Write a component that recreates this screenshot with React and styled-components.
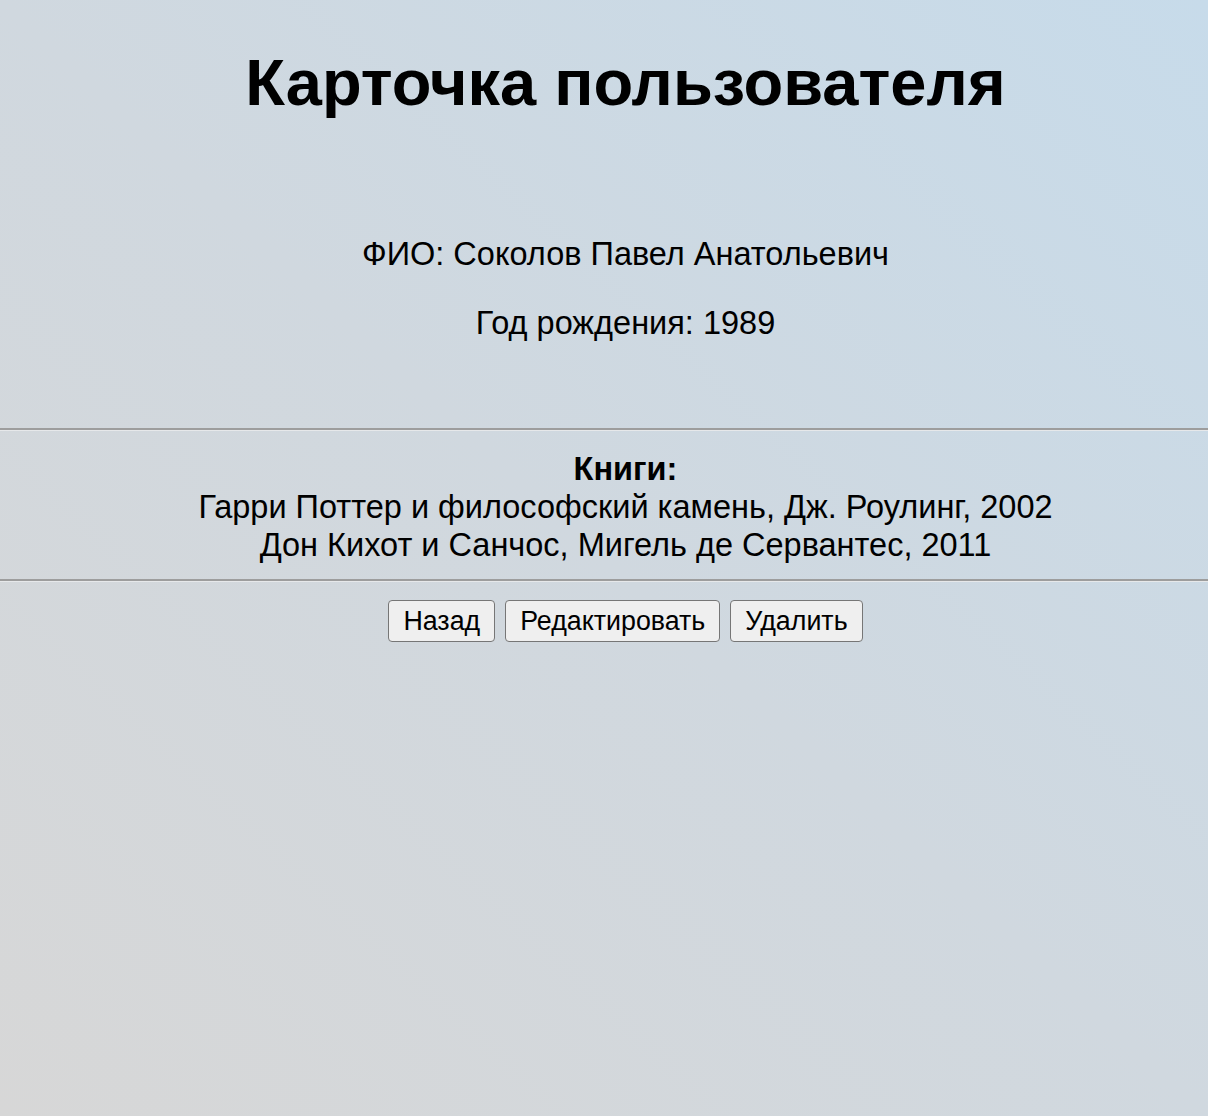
import React from "react";
import styled, { createGlobalStyle } from "styled-components";

const GlobalStyle = createGlobalStyle`
  html, body {
    margin: 0;
    padding: 0;
  }
  body {
    min-height: 100vh;
    background: linear-gradient(to top right, #d7d7d7 0%, #d0d8df 50%, #c7dbea 100%);
    font-family: "Liberation Sans", Arial, sans-serif;
    color: #000;
  }
`;

const Page = styled.div`
  min-height: 100vh;
  display: flex;
  flex-direction: column;
`;

const Section = styled.div`
  padding-left: 43px;
  text-align: center;
`;

const Title = styled.h1`
  margin: 45px 0 0 0;
  font-size: 65px;
  font-weight: bold;
`;

const Info = styled.div`
  margin-top: 116px;
  display: flex;
  flex-direction: column;
  gap: 32px;
  padding-bottom: 86px;
`;

const Line = styled.p`
  margin: 0;
  font-size: 32.5px;
`;

const Divider = styled.hr`
  margin: 0;
  border: none;
  border-top: 2px solid #9d9d9d;
  border-bottom: 1px solid #e6e8ea;
  height: 0;
`;

const Books = styled.div`
  padding: 19px 0 15px;
  font-size: 32.5px;
  line-height: 38px;
`;

const BooksTitle = styled.div`
  font-weight: bold;
`;

const Actions = styled.div`
  display: flex;
  justify-content: center;
  gap: 10px;
  margin-top: 18px;
`;

const Button = styled.button`
  font-family: "Liberation Sans", Arial, sans-serif;
  font-size: 26.8px;
  height: 42px;
  padding: 0 14px;
  background: #efefef;
  border: 1.5px solid #767676;
  border-radius: 4px;
  color: #000;
`;

const books = [
  "Гарри Поттер и философский камень, Дж. Роулинг, 2002",
  "Дон Кихот и Санчос, Мигель де Сервантес, 2011",
];

export default function App() {
  return (
    <Page>
      <GlobalStyle />
      <Section>
        <Title>Карточка пользователя</Title>
        <Info>
          <Line>ФИО: Соколов Павел Анатольевич</Line>
          <Line>Год рождения: 1989</Line>
        </Info>
      </Section>
      <Divider />
      <Section>
        <Books>
          <BooksTitle>Книги:</BooksTitle>
          {books.map((b) => (
            <div key={b}>{b}</div>
          ))}
        </Books>
      </Section>
      <Divider />
      <Section>
        <Actions>
          <Button>Назад</Button>
          <Button>Редактировать</Button>
          <Button>Удалить</Button>
        </Actions>
      </Section>
    </Page>
  );
}
